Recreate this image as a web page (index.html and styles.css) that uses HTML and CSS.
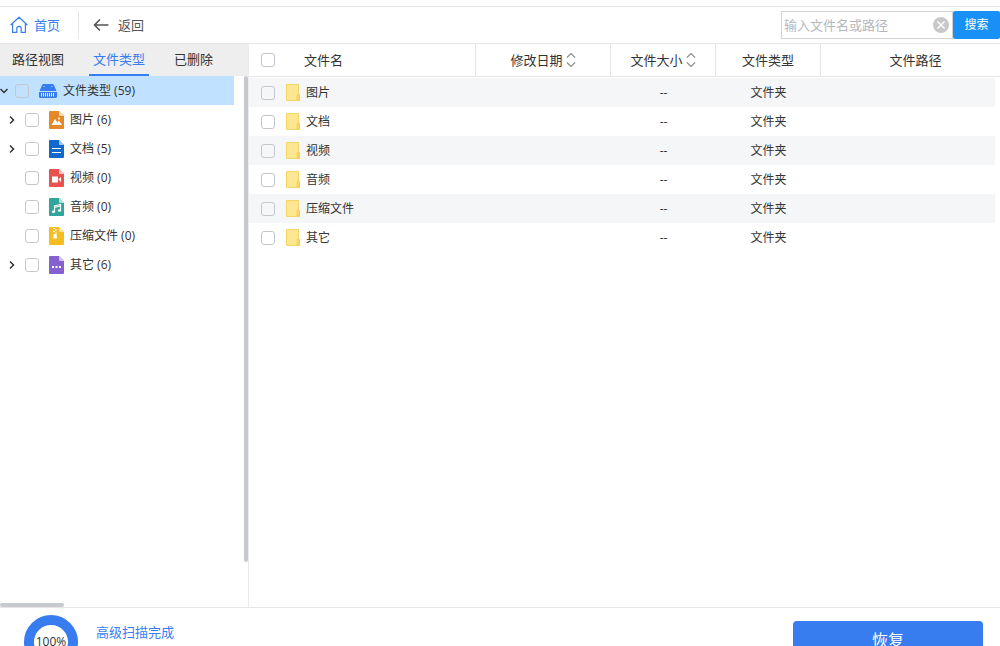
FILE: index.html
```html
<!DOCTYPE html>
<html lang="zh-CN">
<head>
<meta charset="utf-8">
<title>文件类型</title>
<link rel="stylesheet" href="styles.css">
</head>
<body>
<svg class="defs" aria-hidden="true">
  <symbol id="folder" viewBox="0 0 14 17">
    <path d="M.5.5h12v9l1 1v6H.5z" fill="#ffe692" stroke="#f5d565"/>
    <path d="M11 16v-5l1-1.500 1.500 1.500v5z" fill="#fbd85c" stroke="#f1cb4a" stroke-width=".6"/>
  </symbol>
  <symbol id="sort" viewBox="0 0 10 16">
    <path d="M1 5.500 5 1.500l4 4M1 10.500l4 4 4-4" fill="none" stroke="#8c8c8c" stroke-width="1.200"/>
  </symbol>
  <symbol id="arrow-right" viewBox="0 0 8 10">
    <path d="M2 1.500 5.500 5 2 8.500" fill="none" stroke="#333" stroke-width="1.500"/>
  </symbol>
</svg>

<header class="toolbar">
  <a class="nav-link home" href="#">
    <svg width="18" height="18" viewBox="0 0 18 18" fill="none" stroke="#377df0" stroke-width="1.200" stroke-linejoin="round" stroke-linecap="round"><path d="M1 8.800 9 1.200l8 7.600M2.600 8v8.400h4.200v-3.900a2.200 2.200 0 0 1 4.400 0v3.900h4.200V8"/></svg>
    <span>首页</span>
  </a>
  <a class="nav-link back" href="#">
    <svg width="16" height="14" viewBox="0 0 16 14" fill="none" stroke="#555" stroke-width="1.600"><path d="M15.500 7H1.500M7 1.500 1.500 7 7 12.500"/></svg>
    <span>返回</span>
  </a>
  <form class="search">
    <div class="search-field">
      <input type="text" placeholder="输入文件名或路径" aria-label="输入文件名或路径">
      <button class="clear" type="button" aria-label="清除">
        <svg width="16" height="16" viewBox="0 0 16 16"><circle cx="8" cy="8" r="8" fill="#c8c8c8"/><path d="m4.500 4.500 7 7m0-7-7 7" stroke="#fff" stroke-width="1.500"/></svg>
      </button>
    </div>
    <button class="search-button" type="button">搜索</button>
  </form>
</header>

<main class="workspace">
  <aside class="sidebar">
    <nav class="tabs">
      <button type="button">路径视图</button>
      <button type="button" class="active">文件类型</button>
      <button type="button">已删除</button>
    </nav>
    <ul class="tree">
      <li>
        <div class="node root">
          <svg class="expander" width="8" height="8" viewBox="0 0 8 8"><path d="M.5 2 4 5.500 7.500 2" fill="none" stroke="#333" stroke-width="1.500"/></svg>
          <input type="checkbox" id="t0">
          <svg width="18" height="14" viewBox="0 0 18 14"><path d="M4.500 0h9a1.500 1.500 0 0 1 1.400 1L17.500 7H.5L3.100 1A1.500 1.500 0 0 1 4.500 0z" fill="#377df0"/><path d="M0 8h18v4.500a1.500 1.500 0 0 1-1.500 1.500h-15A1.500 1.500 0 0 1 0 12.500z" fill="#377df0"/><path d="M2.500 9v3.500m2-3.500v3.500m2-3.500v3.500m2-3.500v3.500m2-3.500v3.500m2-3.500v3.500m2-3.500v3.500" stroke="#e8f3ff"/><path d="M4.500 2.500h1m7 0h1" stroke="#c0e1ff"/></svg>
          <label for="t0">文件类型 (59)</label>
        </div>
        <ul>
          <li class="node">
            <svg class="expander" width="8" height="10"><use href="#arrow-right"/></svg>
            <input type="checkbox" id="t1">
            <svg width="15" height="18" viewBox="0 0 15 18"><path d="M1 0h9l5 5v12a1 1 0 0 1-1 1H1a1 1 0 0 1-1-1V1a1 1 0 0 1 1-1z" fill="#e58926"/><path d="M10 0l5 5h-4a1 1 0 0 1-1-1z" fill="#f8d9b4"/><path d="m2.500 14 3.500-6 2.500 3.500 1.500-2 3 4.500z" fill="#fff"/><circle cx="10" cy="7.500" r="1" fill="#fff"/></svg>
            <label for="t1">图片 (6)</label>
          </li>
          <li class="node">
            <svg class="expander" width="8" height="10"><use href="#arrow-right"/></svg>
            <input type="checkbox" id="t2">
            <svg width="15" height="18" viewBox="0 0 15 18"><path d="M1 0h9l5 5v12a1 1 0 0 1-1 1H1a1 1 0 0 1-1-1V1a1 1 0 0 1 1-1z" fill="#1268cb"/><path d="M10 0l5 5h-4a1 1 0 0 1-1-1z" fill="#a7caf0"/><path d="M3 8.500h9M3 12.500h9" stroke="#fff" stroke-width="1.200"/></svg>
            <label for="t2">文档 (5)</label>
          </li>
          <li class="node">
            <span class="expander"></span>
            <input type="checkbox" id="t3">
            <svg width="15" height="18" viewBox="0 0 15 18"><path d="M1 0h9l5 5v12a1 1 0 0 1-1 1H1a1 1 0 0 1-1-1V1a1 1 0 0 1 1-1z" fill="#e9524f"/><path d="M10 0l5 5h-4a1 1 0 0 1-1-1z" fill="#f9c3c2"/><path d="M3 7.500h6v6H3zM9.500 10.200 12 8v5l-2.500-2.200z" fill="#fff"/></svg>
            <label for="t3">视频 (0)</label>
          </li>
          <li class="node">
            <span class="expander"></span>
            <input type="checkbox" id="t4">
            <svg width="15" height="18" viewBox="0 0 15 18"><path d="M1 0h9l5 5v12a1 1 0 0 1-1 1H1a1 1 0 0 1-1-1V1a1 1 0 0 1 1-1z" fill="#2fa59b"/><path d="M10 0l5 5h-4a1 1 0 0 1-1-1z" fill="#b5e0dc"/><path d="M5.500 13.500V8l6-1.500v6M5.500 9.500l6-1.500" fill="none" stroke="#fff" stroke-width="1.200"/><ellipse cx="4.500" cy="13.800" rx="1.700" ry="1.300" fill="#fff"/><ellipse cx="10.500" cy="12.500" rx="1.700" ry="1.300" fill="#fff"/></svg>
            <label for="t4">音频 (0)</label>
          </li>
          <li class="node">
            <span class="expander"></span>
            <input type="checkbox" id="t5">
            <svg width="15" height="18" viewBox="0 0 15 18"><path d="M1 0h9l5 5v12a1 1 0 0 1-1 1H1a1 1 0 0 1-1-1V1a1 1 0 0 1 1-1z" fill="#f5bd1f"/><path d="M10 0l5 5h-4a1 1 0 0 1-1-1z" fill="#fbe5a5"/><path d="M4 1.500h2m0 1.500h2M4 4.500h2M6 6h2" stroke="#fff" stroke-width="1.200"/><path d="M4.500 7h3l.5 4.500H4z" fill="#fff"/></svg>
            <label for="t5">压缩文件 (0)</label>
          </li>
          <li class="node">
            <svg class="expander" width="8" height="10"><use href="#arrow-right"/></svg>
            <input type="checkbox" id="t6">
            <svg width="15" height="18" viewBox="0 0 15 18"><path d="M1 0h9l5 5v12a1 1 0 0 1-1 1H1a1 1 0 0 1-1-1V1a1 1 0 0 1 1-1z" fill="#8560d0"/><path d="M10 0l5 5h-4a1 1 0 0 1-1-1z" fill="#d3c4ef"/><path d="M3 10h2v2H3zm3.500 0h2v2h-2zm3.500 0h2v2h-2z" fill="#fff"/></svg>
            <label for="t6">其它 (6)</label>
          </li>
        </ul>
      </li>
    </ul>
    <span class="thumb thumb-y"></span>
    <span class="thumb thumb-x"></span>
  </aside>

  <section class="files">
    <table>
      <colgroup><col class="col-name"><col class="col-date"><col class="col-size"><col class="col-type"><col></colgroup>
      <thead>
        <tr>
          <th><div class="name head-name"><input type="checkbox" aria-label="全选"><span>文件名</span></div></th>
          <th><button class="sorter" type="button">修改日期<svg width="10" height="16"><use href="#sort"/></svg></button></th>
          <th><button class="sorter" type="button">文件大小<svg width="10" height="16"><use href="#sort"/></svg></button></th>
          <th>文件类型</th>
          <th>文件路径</th>
        </tr>
      </thead>
      <tbody>
        <tr><td><div class="name"><input type="checkbox" id="f1"><svg width="14" height="17"><use href="#folder"/></svg><label for="f1">图片</label></div></td><td></td><td>--</td><td>文件夹</td><td></td></tr>
        <tr><td><div class="name"><input type="checkbox" id="f2"><svg width="14" height="17"><use href="#folder"/></svg><label for="f2">文档</label></div></td><td></td><td>--</td><td>文件夹</td><td></td></tr>
        <tr><td><div class="name"><input type="checkbox" id="f3"><svg width="14" height="17"><use href="#folder"/></svg><label for="f3">视频</label></div></td><td></td><td>--</td><td>文件夹</td><td></td></tr>
        <tr><td><div class="name"><input type="checkbox" id="f4"><svg width="14" height="17"><use href="#folder"/></svg><label for="f4">音频</label></div></td><td></td><td>--</td><td>文件夹</td><td></td></tr>
        <tr><td><div class="name"><input type="checkbox" id="f5"><svg width="14" height="17"><use href="#folder"/></svg><label for="f5">压缩文件</label></div></td><td></td><td>--</td><td>文件夹</td><td></td></tr>
        <tr><td><div class="name"><input type="checkbox" id="f6"><svg width="14" height="17"><use href="#folder"/></svg><label for="f6">其它</label></div></td><td></td><td>--</td><td>文件夹</td><td></td></tr>
      </tbody>
    </table>
  </section>
</main>

<footer class="status">
  <div class="progress">100%</div>
  <p class="message">高级扫描完成</p>
  <button class="recover" type="button">恢复</button>
</footer>
</body>
</html>
```
FILE: styles.css
```css
* { box-sizing: border-box; }

body {
  display: flex;
  flex-direction: column;
  height: 100vh;
  margin: 0;
  padding-top: 6px;
  overflow: hidden;
  background: #fff;
  color: #333;
  font-family: "Open Sans", "Noto Sans CJK SC", sans-serif;
  font-size: 13px;
  line-height: 20px;
}

button, input { font: inherit; color: inherit; }
button { padding: 0; border: 0; background: none; cursor: pointer; }
svg { display: block; flex: none; }
ul { margin: 0; padding: 0; list-style: none; }
.defs { position: absolute; width: 0; height: 0; }

input[type="checkbox"] {
  flex: none;
  appearance: none;
  width: 14px;
  height: 14px;
  margin: 0;
  border: 1px solid #c4c7cc;
  border-radius: 3px;
}

/* Toolbar */
.toolbar {
  display: flex;
  flex: none;
  align-items: center;
  height: 38px;
  border-top: 1px solid #e6e6e6;
  border-bottom: 1px solid #e6e6e6;
}
.nav-link {
  display: flex;
  align-items: center;
  height: 28px;
  text-decoration: none;
}
.home { gap: 6px; padding: 0 18px 0 10px; border-right: 1px solid #e6e6e6; color: #377df0; }
.back { gap: 9px; padding-left: 14px; color: #555; }
.search { display: flex; height: 28px; margin-left: auto; }
.search-field {
  display: flex;
  align-items: center;
  width: 172px;
  padding: 0 3px 0 2px;
  border: 1px solid #d2d2d2;
}
.search-field input {
  flex: 1;
  min-width: 0;
  height: 24px;
  padding: 0;
  border: 0;
  outline: 0;
  background: none;
}
.search-field input::placeholder { color: #b4b8bd; opacity: 1; }
.search-button {
  width: 47px;
  border-radius: 2px;
  background: #1890f5;
  color: #fff;
  font-size: 12px;
}

/* Sidebar */
.workspace { display: flex; flex: 1; min-height: 0; }
.sidebar {
  position: relative;
  flex: none;
  width: 249px;
  border-right: 1px solid #ececec;
}
.tabs {
  display: flex;
  gap: 21px;
  height: 32px;
  padding-left: 8px;
  background: #eee;
}
.tabs button { padding: 0 4px; border-bottom: 2px solid transparent; }
.tabs .active { border-color: #377df0; color: #377df0; }
.tree { padding-right: 14px; font-size: 12px; }
.node {
  display: flex;
  align-items: center;
  height: 29px;
  padding-left: 8px;
}
.node .expander { flex: none; width: 8px; margin-right: 9px; }
.node input { margin-right: 10px; }
.node label { padding-left: 6px; }
.root { padding-left: 0; background: #c0e1ff; }
.root .expander { margin-right: 7px; margin-left: 0; }
.root label { padding-left: 6px; }
.thumb { position: absolute; border-radius: 2px; background: #c6c9ce; }
.thumb-y { top: 32px; right: 0; bottom: 45px; width: 4px; }
.thumb-x { bottom: 0; left: 0; width: 64px; height: 4px; }

/* File table */
.files { flex: 1; min-width: 0; }
table {
  width: 100%;
  border-spacing: 0;
  table-layout: fixed;
}
.col-name { width: 227px; }
.col-date { width: 135px; }
.col-size, .col-type { width: 105px; }
th {
  height: 33px;
  padding: 0;
  border-right: 1px solid #e6e6e6;
  border-bottom: 1px solid #e6e6e6;
  font-weight: 400;
}
th:last-child { padding-left: 10px; border-right: 0; }
td {
  height: 29px;
  padding: 0;
  font-size: 12px;
  text-align: center;
}
tbody tr:first-child td { height: 30px; border-top: 1px solid #fff; }
tbody tr:nth-child(odd) td { background: #f5f6f8; }
td:last-child { border-right: 5px solid #fff; }
.name { display: flex; align-items: center; padding-left: 12px; }
.name svg { margin: 0 6px 0 11px; }
.head-name { gap: 29px; }
.sorter { display: inline-flex; align-items: center; gap: 3px; }

/* Status bar */
.status {
  display: flex;
  flex: none;
  align-items: flex-start;
  height: 39px;
  padding: 0 17px 0 24px;
  overflow: hidden;
  border-top: 1px solid #e6e6e6;
}
.progress {
  display: flex;
  flex: none;
  align-items: center;
  justify-content: center;
  width: 54px;
  height: 54px;
  margin-top: 7px;
  border: 10px solid #377df0;
  border-radius: 50%;
  font-size: 12px;
}
.message { margin: 14px 0 0 18px; color: #377df0; }
.recover {
  flex: none;
  width: 190px;
  height: 38px;
  margin: 13px 0 0 auto;
  border-radius: 4px;
  background: #377df0;
  color: #fff;
  font-size: 16px;
}
```
